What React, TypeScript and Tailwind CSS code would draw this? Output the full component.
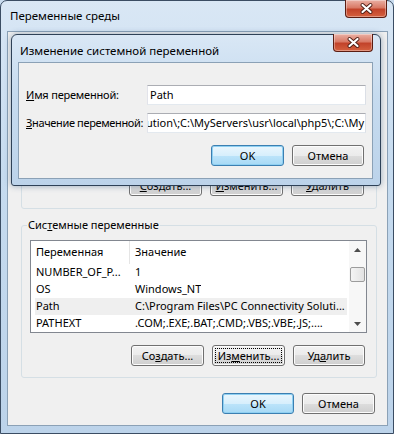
import React from 'react';

const glass =
  "bg-[linear-gradient(180deg,#d9e7f5_0%,#c6dbef_40%,#bcd3ea_100%)]";

function CloseButton({ className = '' }: { className?: string }) {
  return (
    <div
      className={`flex items-center justify-center rounded-b-[4px] border border-t-0 border-[#5b1d12] bg-[linear-gradient(180deg,#eab0a4_0%,#d97a66_45%,#c2432a_55%,#d5613f_100%)] shadow-[inset_0_0_0_1px_rgba(255,255,255,0.35)] ${className}`}
    >
      <svg width="13" height="11" viewBox="0 0 13 11">
        <path d="M2.5 2 L10.5 9 M10.5 2 L2.5 9" stroke="#4a1a12" strokeWidth="3.8" strokeLinecap="round" />
        <path d="M2.5 2 L10.5 9 M10.5 2 L2.5 9" stroke="#ffffff" strokeWidth="2.2" strokeLinecap="round" />
      </svg>
    </div>
  );
}

function Btn({
  children,
  isDefault,
  focused,
  w = 'w-[73px]',
}: {
  children: React.ReactNode;
  isDefault?: boolean;
  focused?: boolean;
  w?: string;
}) {
  return (
    <div
      className={`flex h-[21px] ${w} items-center justify-center rounded-[3px] border p-[2px] ${
        isDefault
          ? 'border-[#3c7fb1] bg-[linear-gradient(180deg,#eaf6fd_0%,#d7effc_50%,#bce4fa_50%,#a7d9f5_100%)] shadow-[inset_0_0_0_1px_#8fd0f2]'
          : 'border-[#707070] bg-[linear-gradient(180deg,#f2f2f2_0%,#ebebeb_50%,#dddddd_50%,#cfcfcf_100%)] shadow-[inset_0_0_0_1px_#fcfcfc]'
      }`}
    >
      <span
        className={`flex h-full w-full items-center justify-center whitespace-nowrap leading-none ${
          focused ? 'border border-dotted border-black' : ''
        }`}
      >
        {children}
      </span>
    </div>
  );
}

const rows = [
  { name: 'NUMBER_OF_P...', value: '1' },
  { name: 'OS', value: 'Windows_NT' },
  { name: 'Path', value: 'C:\\Program Files\\PC Connectivity Soluti...', hot: true },
  { name: 'PATHEXT', value: '.COM;.EXE;.BAT;.CMD;.VBS;.VBE;.JS;....' },
];

function ListView() {
  return (
    <div className="ml-[8px] mt-[14px] flex h-[93px] w-[337px] border border-[#828790] bg-white">
      <div className="flex min-w-0 flex-1 flex-col overflow-hidden">
        <div className="flex h-[23px] shrink-0 items-center">
          <div className="flex h-full w-[99px] items-center border-r border-[#e5e5e5] pl-[5px]">Переменная</div>
          <div className="pl-[5px]">Значение</div>
        </div>
        {rows.map((r) => (
          <div
            key={r.name}
            className={`ml-[4px] mr-[2px] flex h-[17px] shrink-0 items-center whitespace-nowrap ${
              r.hot ? 'bg-[#efefef]' : ''
            }`}
          >
            <div className="w-[95px] overflow-hidden pl-[1px]">{r.name}</div>
            <div className="overflow-hidden pl-[5px]">{r.value}</div>
          </div>
        ))}
      </div>
      <div className="flex w-[17px] shrink-0 flex-col items-center bg-[#f7f7f7]">
        <div className="flex h-[17px] items-center justify-center">
          <svg width="7" height="4" viewBox="0 0 7 4">
            <polygon points="0,4 3.5,0 7,4" fill="#4d4d4d" />
          </svg>
        </div>
        <div className="mt-[9px] h-[15px] w-[15px] rounded-[2px] border border-[#9c9c9c] bg-[linear-gradient(90deg,#f4f4f4,#e2e2e2)]" />
        <div className="flex-1" />
        <div className="flex h-[17px] items-center justify-center">
          <svg width="7" height="4" viewBox="0 0 7 4">
            <polygon points="0,0 3.5,4 7,0" fill="#4d4d4d" />
          </svg>
        </div>
      </div>
    </div>
  );
}

export default function App() {
  return (
    <div className="relative h-[434px] w-[394px] overflow-hidden bg-[#c9dcef] font-['Noto_Sans','Open_Sans',sans-serif] text-[11px] text-black">
      {/* Outer window: Переменные среды */}
      <div className={`relative flex h-[434px] w-[394px] flex-col rounded-t-[7px] border border-[#3b4d63] ${glass}`}>
        <div className="flex h-[30px] shrink-0 items-center pl-[9px] text-[11.5px]">Переменные среды</div>
        <CloseButton className="absolute right-[6px] top-[-1px] h-[18px] w-[42px]" />
        <div className="mb-[7px] ml-[6px] mr-[5px] flex flex-1 flex-col border border-[#8ba1b6] bg-[#f0f0f0]">
          {/* user variables (behind the dialog) */}
          <div className="ml-[13px] mt-[10px] flex h-[167px] w-[356px] flex-col justify-end rounded-[3px] border border-[#d5dfe5] pb-[12px] pr-[12px]">
            <div className="flex justify-end gap-[8px]">
              <Btn><span><u>С</u>оздать...</span></Btn>
              <Btn><span><u>И</u>зменить...</span></Btn>
              <Btn><span><u>У</u>далить</span></Btn>
            </div>
          </div>

          {/* system variables */}
          <div className="relative ml-[13px] mt-[16px] flex h-[153px] w-[356px] flex-col rounded-[3px] border border-[#d5dfe5]">
            <div className="absolute left-[5px] top-[-9px] whitespace-nowrap bg-[#f0f0f0] px-[1px] leading-[16px]">
              Сис<u>т</u>емные переменные
            </div>
            <ListView />
            <div className="mt-[12px] flex justify-end gap-[8px] pr-[11px]">
              <Btn><span>Со<u>з</u>дать...</span></Btn>
              <Btn focused><span>Из<u>м</u>енить...</span></Btn>
              <Btn w="w-[72px]"><span>Уд<u>а</u>лить</span></Btn>
            </div>
          </div>

          <div className="mt-[15px] flex justify-end gap-[8px] pr-[12px]">
            <Btn isDefault w="w-[72px]">OK</Btn>
            <Btn>Отмена</Btn>
          </div>
        </div>
      </div>

      {/* Inner dialog: Изменение системной переменной */}
      <div
        className={`absolute left-[11px] top-[34px] flex h-[152px] w-[370px] flex-col rounded-t-[6px] rounded-b-[3px] border border-[#2e4157] shadow-[0_0_6px_rgba(40,80,120,0.45)] ${glass}`}
      >
        <div className="flex h-[27px] shrink-0 items-center pl-[8px] pt-[5px] text-[11.5px]">Изменение системной переменной</div>
        <CloseButton className="absolute right-[7px] top-[-1px] h-[18px] w-[40px]" />
        <div className="mb-[6px] ml-[6px] mr-[7px] flex flex-1 flex-col border border-[#8ba1b6] bg-[#f0f0f0] pl-[7px] pr-[6px] pt-[22px]">
          <div className="flex h-[20px] items-center">
            <div className="w-[121px] shrink-0 whitespace-nowrap tracking-[-0.2px]"><u>И</u>мя переменной:</div>
            <div className="flex h-[20px] w-[219px] items-center border border-[#abadb3] border-l-[#e2e3ea] border-r-[#dbdfe6] border-b-[#e3e9ef] bg-white pl-[2px]">
              Path
            </div>
          </div>
          <div className="mt-[8px] flex h-[20px] items-center">
            <div className="w-[121px] shrink-0 whitespace-nowrap tracking-[-0.35px]"><u>З</u>начение переменной:</div>
            <div className="flex h-[20px] w-[219px] items-center justify-end overflow-hidden whitespace-nowrap border border-[#abadb3] border-l-[#e2e3ea] border-r-[#dbdfe6] border-b-[#e3e9ef] bg-white pr-[1px]">
              Solution\;C:\MyServers\usr\local\php5\;C:\My
            </div>
          </div>
          <div className="mt-[12px] flex justify-end gap-[8px] pr-[2px]">
            <Btn isDefault>OK</Btn>
            <Btn w="w-[72px]">Отмена</Btn>
          </div>
        </div>
      </div>
    </div>
  );
}
